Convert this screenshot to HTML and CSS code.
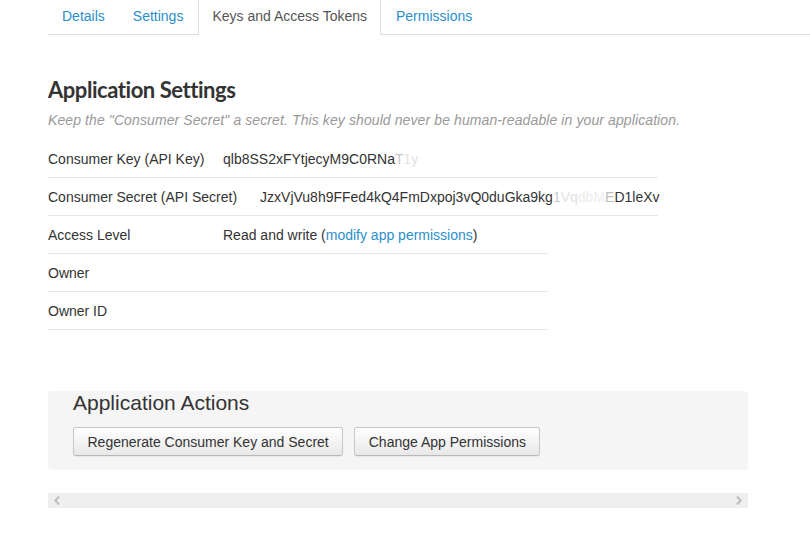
FILE: index.html
```html
<!DOCTYPE html>
<html>
<head>
<meta charset="utf-8">
<link rel="stylesheet" href="styles.css">
</head>
<body>
<div class="page">
  <ul class="tabs">
    <li class="tab"><a href="#">Details</a></li>
    <li class="tab"><a href="#">Settings</a></li>
    <li class="tab active"><a href="#">Keys and Access Tokens</a></li>
    <li class="tab"><a href="#">Permissions</a></li>
  </ul>
  <div class="content">
    <h2 class="title">Application Settings</h2>
    <p class="hint">Keep the "Consumer Secret" a secret. This key should never be human-readable in your application.</p>
    <div class="table">
      <div class="row wide"><span class="label">Consumer Key (API Key)</span><span class="value">qlb8SS2xFYtjecyM9C0RNa<span class="f1">T</span><span class="f2">1y</span></span></div>
      <div class="row wide"><span class="label auto">Consumer Secret (API Secret)</span><span class="value">JzxVjVu8h9FFed4kQ4FmDxpoj3vQ0duGka9kg<span class="f1">1</span><span class="f2">Vq</span><span class="f3">dbM</span><span class="f1b">E</span>D1leXv</span></div>
      <div class="row"><span class="label">Access Level</span><span class="value">Read and write (<a href="#">modify app permissions</a>)</span></div>
      <div class="row"><span class="label">Owner</span><span class="value"></span></div>
      <div class="row"><span class="label">Owner ID</span><span class="value"></span></div>
    </div>
    <div class="actions">
      <h3 class="actions-title">Application Actions</h3>
      <div class="buttons">
        <button class="btn">Regenerate Consumer Key and Secret</button>
        <button class="btn">Change App Permissions</button>
      </div>
    </div>
    <div class="scrollbar">
      <svg class="chev" width="6" height="9" viewBox="0 0 6 9"><path d="M5 0.5 L1.3 4.5 L5 8.5" fill="none" stroke="#bdbdbd" stroke-width="2"/></svg>
      <svg class="chev" width="6" height="9" viewBox="0 0 6 9"><path d="M1 0.5 L4.7 4.5 L1 8.5" fill="none" stroke="#bdbdbd" stroke-width="2"/></svg>
    </div>
  </div>
</div>
</body>
</html>
```
FILE: styles.css
```css
html, body {
  margin: 0;
  padding: 0;
  background: #fff;
}
body {
  font-family: "Liberation Sans", Arial, sans-serif;
  font-size: 14px;
  color: #333;
}
.page {
  padding-left: 48px;
}
.tabs {
  list-style: none;
  margin: 0;
  padding: 0;
  display: flex;
  border-bottom: 1px solid #ddd;
  height: 34px;
}
.tab {
  margin-bottom: -1px;
}
.tab a {
  display: block;
  padding: 6px 14px 8px;
  line-height: 20px;
  font-size: 14px;
  color: #2a8fcb;
  text-decoration: none;
  border: 1px solid transparent;
  border-top: 0;
  border-bottom: 0;
}
.tab:first-child a {
  padding-left: 13px;
  padding-right: 12px;
}
.tab.active a {
  color: #555;
  background: #fff;
  border-left-color: #ddd;
  border-right-color: #ddd;
  padding-left: 13px;
  padding-right: 13px;
  height: 21px;
}
.content {
  width: 700px;
}
.title {
  font-family: Lato, "Liberation Sans", sans-serif;
  font-weight: 700;
  font-size: 22px;
  margin: 41px 0 0;
  line-height: 28px;
  color: #333;
  letter-spacing: -0.45px;
}
.hint {
  margin: 6px 0 0;
  font-style: italic;
  color: #999;
  line-height: 20px;
  letter-spacing: 0.1px;
}
.table {
  margin-top: 10px;
  width: 500px;
}
.row {
  display: flex;
  align-items: center;
  height: 37px;
  border-bottom: 1px solid #e8e8e8;
}
.row.wide {
  width: 610px;
}
.label {
  flex: 0 0 175px;
  white-space: nowrap;
}
.label.auto {
  flex: none;
  padding-right: 23px;
}
.value {
  white-space: nowrap;
}
.value a {
  color: #2a8fcb;
  text-decoration: none;
}
.f1 { color: #c8c8c8; }
.f1b { color: #bdbdbd; }
.f2 { color: #e2e2e2; }
.f3 { color: #ededed; }
.actions {
  margin-top: 61px;
  background: #f5f5f5;
  border-radius: 4px;
  padding: 0 25px 14px;
}
.actions-title {
  margin: 0;
  font-weight: normal;
  font-size: 21px;
  line-height: 24px;
  color: #333;
}
.buttons {
  display: flex;
  gap: 11px;
  margin-top: 12px;
}
.btn {
  font-family: "Liberation Sans", Arial, sans-serif;
  font-size: 14px;
  color: #333;
  height: 29px;
  padding: 0 13.5px;
  border: 1px solid #c8c8c8;
  border-bottom-color: #b8b8b8;
  border-radius: 3px;
  background: linear-gradient(#ffffff, #e8e8e8);
  box-shadow: 0 1px 1px rgba(0,0,0,0.06);
}
.scrollbar {
  margin-top: 23px;
  height: 15px;
  background: #efefef;
  display: flex;
  justify-content: space-between;
  align-items: center;
  padding: 0 6px;
}
.chev {
  display: block;
}
```
